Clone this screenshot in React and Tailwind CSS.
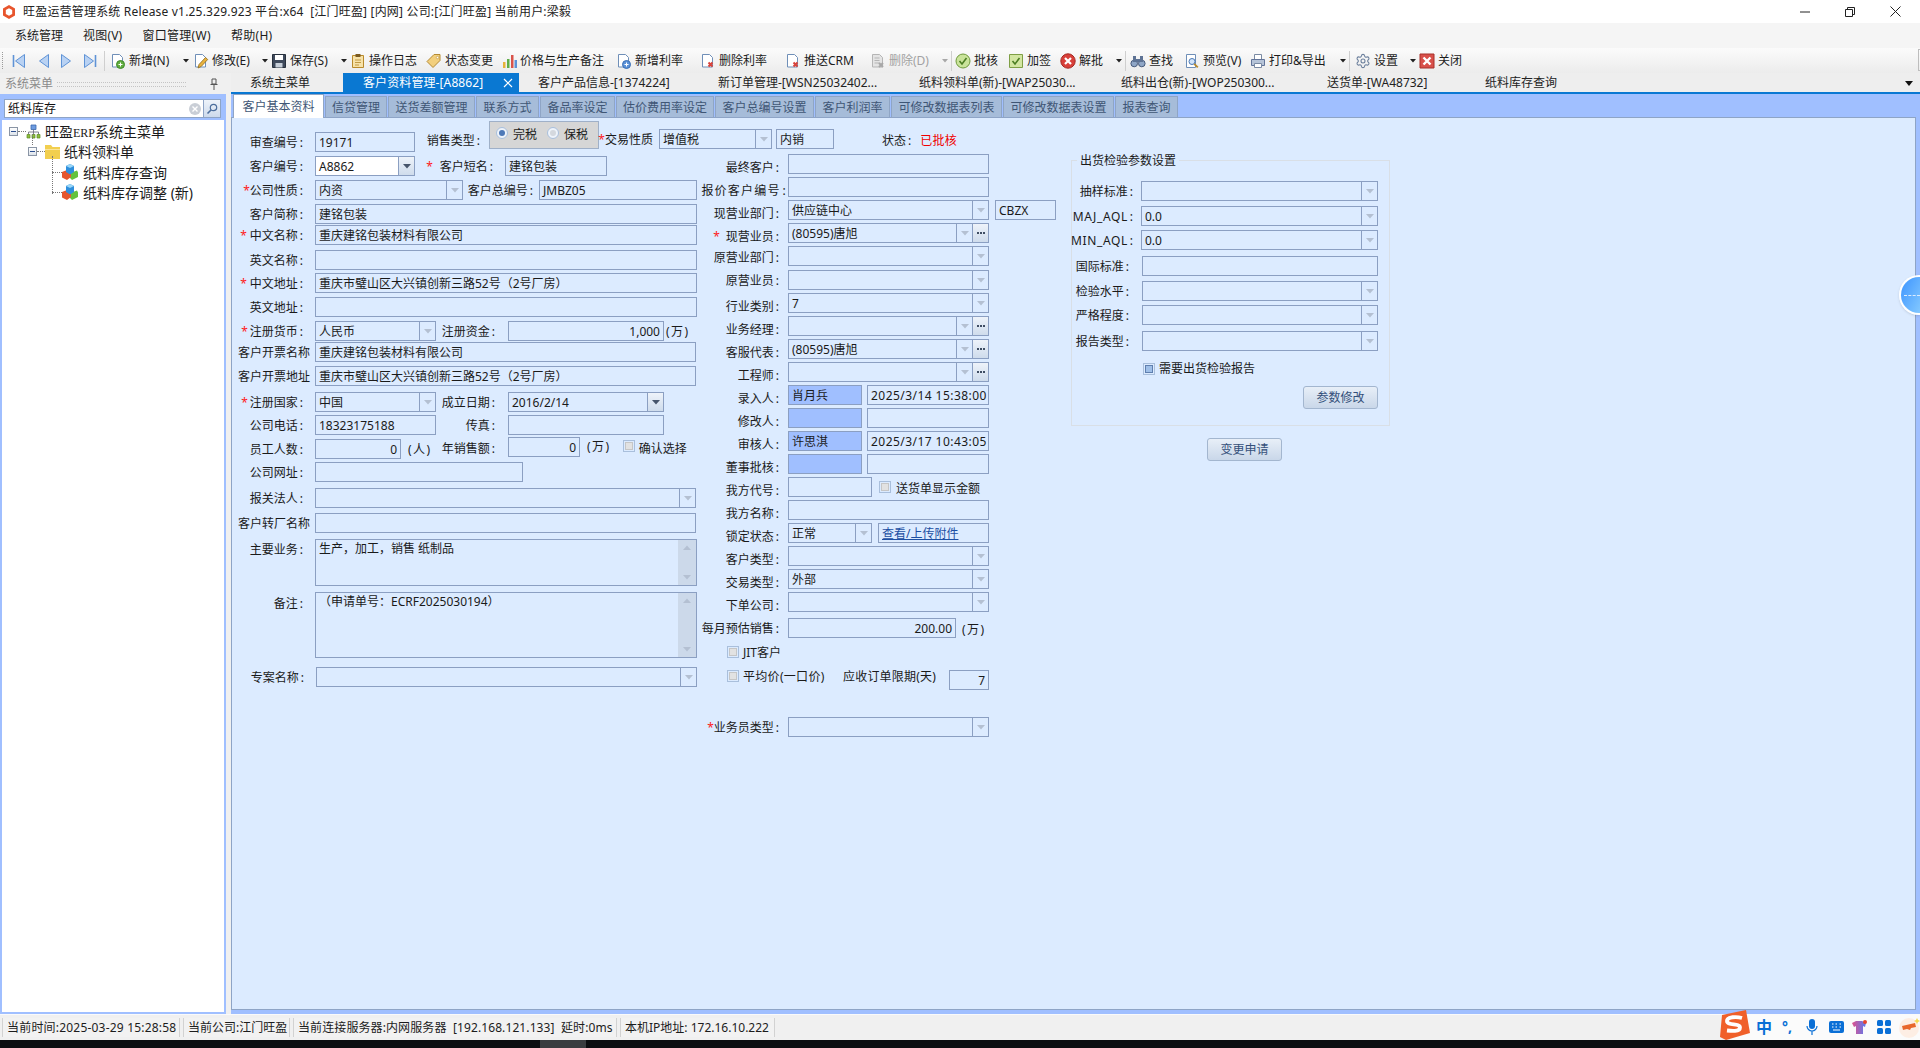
import { Children } from "react"
import { Settings } from "lucide-react"

const Tri = ({ dark }) => (
  <svg viewBox="0 0 8 5" className="w-2 h-[5px]">
    <path d="M0 0h8L4 4.5z" fill={dark ? "#47556b" : "#b4c0d2"} />
  </svg>
)

const Nav = ({ flip, bar }) => (
  <svg viewBox="0 0 14 16" className={flip ? "w-[14px] h-4 -scale-x-100" : "w-[14px] h-4"}>
    <path d="M12.5 1.5v13L3.5 8z" fill="#b9d2f3" stroke="#5f93d6" />
    {bar && <path d="M1.5 2v12" stroke="#5f93d6" strokeWidth="1.6" />}
  </svg>
)

const Doc = ({ badge, gray }) => {
  const line = gray ? "#b5b5b5" : "#6f8fb8"
  return (
    <svg viewBox="0 0 16 16" className="w-4 h-4">
      <path d="M2.5 1.5h7l3 3v9.5h-10z" fill={gray ? "#e4e4e4" : "#fff"} stroke={line} />
      {gray && <path d="M4.5 5h5M4.5 7.5h5M4.5 10h5" stroke="#b5b5b5" />}
      {badge === "green" && <g><circle cx="10.5" cy="11.5" r="4" fill="#62ad3f" stroke="#3f8a2a" /><path d="M10.5 9.5v4M8.5 11.5h4" stroke="#fff" /></g>}
      {badge === "blue" && <g><circle cx="10.5" cy="11.5" r="4" fill="#5c92d8" stroke="#3b6fb5" /><path d="M10.5 9.5v4M8.5 11.5h4" stroke="#fff" /></g>}
      {badge === "red" && <path d="M8.5 9.5l4 4m0-4l-4 4" stroke="#d9443c" strokeWidth="2" />}
      {badge === "grayx" && <path d="M9 10l4 4m0-4l-4 4" stroke="#a8a8a8" strokeWidth="2" />}
    </svg>
  )
}

const Pencil = () => (
  <svg viewBox="0 0 16 16" className="w-4 h-4">
    <path d="M2.5 1.5h7l3 3v9.5h-10z" fill="#fff" stroke="#6f8fb8" />
    <path d="M5 15l1-3.5 6.5-7 2.2 2-6.5 7z" fill="#e9b23c" stroke="#8c6a1e" strokeWidth=".8" />
  </svg>
)

const Floppy = () => (
  <svg viewBox="0 0 16 16" className="w-4 h-4">
    <path d="M1.5 1.5h13v13h-13z" fill="#3f4a5c" stroke="#27303d" />
    <path d="M4 2h8v5H4z" fill="#fff" />
    <path d="M4.5 10h7v4.5h-7z" fill="#c8d0da" />
  </svg>
)

const Clip = () => (
  <svg viewBox="0 0 16 16" className="w-4 h-4">
    <path d="M2.5 2.5h11v12h-11z" fill="#f7e2a8" stroke="#b98a2b" />
    <path d="M5.5 1h5v3h-5z" fill="#7a5a20" />
    <path d="M5 7h6M5 9.5h6M5 12h4" stroke="#c19a45" />
  </svg>
)

const TagIcon = () => (
  <svg viewBox="0 0 16 16" className="w-4 h-4">
    <path d="M8 1.5h6v6l-7 7-6-6z" fill="#f2cf7d" stroke="#b58a33" />
    <circle cx="11.5" cy="4.5" r="1.2" fill="#fff" stroke="#b58a33" strokeWidth=".6" />
  </svg>
)

const Bars = () => (
  <svg viewBox="0 0 16 16" className="w-4 h-4">
    <path d="M2 9h2.5v6H2z" fill="#e6b33a" />
    <path d="M6 6h2.5v9H6z" fill="#5fae48" />
    <path d="M10 2h2.5v13H10z" fill="#d9534a" />
    <path d="M13.5 7H16v8h-2.5z" fill="#5c92d8" />
  </svg>
)

const CheckRound = () => (
  <svg viewBox="0 0 16 16" className="w-4 h-4">
    <circle cx="8" cy="8" r="7" fill="#c9e39a" stroke="#6f9a3b" />
    <path d="M4.5 8l2.5 3 4.5-6" fill="none" stroke="#4b7d22" strokeWidth="1.6" />
  </svg>
)

const CheckBoxIcon = () => (
  <svg viewBox="0 0 16 16" className="w-4 h-4">
    <path d="M1.5 1.5h13v13h-13z" fill="#d3e6a2" stroke="#7f9f45" />
    <path d="M4.5 8l2.5 3 4.5-6" fill="none" stroke="#4b7d22" strokeWidth="1.6" />
  </svg>
)

const Unapprove = () => (
  <svg viewBox="0 0 16 16" className="w-4 h-4">
    <circle cx="8" cy="8" r="7.2" fill="#d8403a" stroke="#a52822" />
    <path d="M5 5l6 6m0-6l-6 6" stroke="#fff" strokeWidth="2.2" />
  </svg>
)

const Binoculars = () => (
  <svg viewBox="0 0 16 16" className="w-4 h-4">
    <circle cx="4.2" cy="10.5" r="3.3" fill="#8fa6c6" stroke="#46597a" />
    <circle cx="11.8" cy="10.5" r="3.3" fill="#8fa6c6" stroke="#46597a" />
    <path d="M3 3h3v6H3zM10 3h3v6h-3zM6 6h4v3H6z" fill="#5d7294" />
  </svg>
)

const Preview = () => (
  <svg viewBox="0 0 16 16" className="w-4 h-4">
    <path d="M2.5 1.5h9v13h-9z" fill="#fff" stroke="#6f8fb8" />
    <circle cx="8" cy="8.5" r="3" fill="#d3e5fa" stroke="#4b79b5" />
    <path d="M10.2 10.8l3.6 3.6" stroke="#b98a2b" strokeWidth="1.8" />
  </svg>
)

const Printer = () => (
  <svg viewBox="0 0 16 16" className="w-4 h-4">
    <path d="M4.5 1.5h7v5h-7z" fill="#fff" stroke="#7a8aa3" />
    <path d="M1.5 6.5h13v6h-13z" fill="#b6c4d8" stroke="#63759a" />
    <path d="M4.5 10.5h7v4h-7z" fill="#fff" stroke="#7a8aa3" />
  </svg>
)

const CloseRed = () => (
  <svg viewBox="0 0 16 16" className="w-4 h-4">
    <path d="M1 1h14v14H1z" fill="#d8504a" stroke="#a8302b" />
    <path d="M4.5 4.5l7 7m0-7l-7 7" stroke="#fff" strokeWidth="2.4" />
  </svg>
)

const Gear = () => <Settings className="w-4 h-4 text-[#6b7f9c]" strokeWidth={1.6} />

const Tool = ({ w, icon, label, muted }) => (
  <div className={w + " h-full flex items-center gap-[3px] shrink-0" + (muted ? " text-[#a2a2a2]" : "")}>
    {icon}
    {label && <span className="whitespace-nowrap">{label}</span>}
  </div>
)

const Drop = ({ w, muted }) => (
  <div className={w + " h-full flex items-center shrink-0"}>
    <svg viewBox="0 0 6 4" className="w-[6px] h-1">
      <path d="M0 0h6L3 3.5z" fill={muted ? "#a8a8a8" : "#222"} />
    </svg>
  </div>
)

const Sep = ({ w }) => (
  <div className={w + " h-full flex items-center shrink-0"}>
    <div className="w-px h-5 bg-[#cfcfcf]" />
  </div>
)

const Toolbar = () => (
  <div className="h-[25px] flex pl-[12px] text-[12px] text-[#1c1c1c] bg-gradient-to-b from-[#fbfbfb] to-[#ececec] relative">
    <div className="absolute left-[2px] top-[4px] h-[17px] border-l border-dotted border-[#9a9a9a]" />
    <Tool w="w-[24px]" icon={<Nav bar />} />
    <Tool w="w-[24px]" icon={<Nav />} />
    <Tool w="w-[23px]" icon={<Nav flip />} />
    <Tool w="w-[21px]" icon={<Nav flip bar />} />
    <Sep w="w-[6px]" />
    <Tool w="w-[73px]" icon={<Doc badge="green" />} label="新增(N)" />
    <Drop w="w-[10px]" />
    <Tool w="w-[69px]" icon={<Pencil />} label="修改(E)" />
    <Drop w="w-[9px]" />
    <Tool w="w-[70px]" icon={<Floppy />} label="保存(S)" />
    <Drop w="w-[9px]" />
    <Tool w="w-[76px]" icon={<Clip />} label="操作日志" />
    <Tool w="w-[75px]" icon={<TagIcon />} label="状态变更" />
    <Tool w="w-[115px]" icon={<Bars />} label="价格与生产备注" />
    <Tool w="w-[84px]" icon={<Doc badge="blue" />} label="新增利率" />
    <Tool w="w-[85px]" icon={<Doc badge="red" />} label="删除利率" />
    <Tool w="w-[85px]" icon={<Doc badge="red" />} label="推送CRM" />
    <Tool w="w-[72px]" icon={<Doc gray badge="grayx" />} label="删除(D)" muted />
    <Drop w="w-[9px]" muted />
    <Sep w="w-[4px]" />
    <Tool w="w-[53px]" icon={<CheckRound />} label="批核" />
    <Tool w="w-[52px]" icon={<CheckBoxIcon />} label="加签" />
    <Tool w="w-[56px]" icon={<Unapprove />} label="解批" />
    <Drop w="w-[9px]" />
    <Sep w="w-[5px]" />
    <Tool w="w-[54px]" icon={<Binoculars />} label="查找" />
    <Tool w="w-[66px]" icon={<Preview />} label="预览(V)" />
    <Tool w="w-[90px]" icon={<Printer />} label="打印&导出" />
    <Drop w="w-[9px]" />
    <Sep w="w-[6px]" />
    <Tool w="w-[55px]" icon={<Gear />} label="设置" />
    <Drop w="w-[9px]" />
    <Tool w="w-[60px]" icon={<CloseRed />} label="关闭" />
    <div className="absolute right-0 top-[1px] w-[2px] h-[22px] border border-r-0 border-[#bdbdbd]" />
  </div>
)

const WinTab = ({ w, children }) => (
  <div className={w + " pl-[19px] h-full flex items-center whitespace-nowrap shrink-0"}>{children}</div>
)

const DocTabs = () => (
  <div className="h-[19px] flex text-[12px] text-[#222] bg-[#eeeeee] relative">
    <WinTab w="w-[112px]">系统主菜单</WinTab>
    <div className="w-[176px] pl-[20px] pr-[6px] h-full flex items-center justify-between bg-[#0a78d2] text-white shrink-0">
      <span className="tracking-[0.1px]">客户资料管理-[A8862]</span>
      <svg viewBox="0 0 10 10" className="w-[10px] h-[10px]"><path d="M1 1l8 8m0-8L1 9" stroke="#fff" strokeWidth="1.2" /></svg>
    </div>
    <WinTab w="w-[180px]">客户产品信息-[1374224]</WinTab>
    <WinTab w="w-[201px]">新订单管理-[WSN25032402...</WinTab>
    <WinTab w="w-[202px]">纸料领料单(新)-[WAP25030...</WinTab>
    <WinTab w="w-[206px]">纸料出仓(新)-[WOP250300...</WinTab>
    <WinTab w="w-[158px]">送货单-[WA48732]</WinTab>
    <WinTab w="w-[120px]">纸料库存查询</WinTab>
    <svg viewBox="0 0 8 5" className="absolute right-[7px] top-[8px] w-2 h-[5px]"><path d="M0 0h8L4 5z" fill="#111" /></svg>
  </div>
)

const PageTab = ({ w, children }) => (
  <div className={w + " h-[21px] mr-px pt-px flex items-center justify-center bg-[#a6bcd9] border border-b-0 border-[#8fa5c5] text-[#3f5675] shrink-0"}>{children}</div>
)

const PageTabs = () => (
  <div className="h-[23px] pl-[2px] flex items-end text-[12px]">
    <div className="w-[91px] h-[24px] -mb-px mr-px relative flex items-center justify-center bg-white border border-b-0 border-[#8fa5c5] text-[#3f5675] shrink-0">客户基本资料</div>
    <PageTab w="w-[62px]">信贷管理</PageTab>
    <PageTab w="w-[87px]">送货差额管理</PageTab>
    <PageTab w="w-[63px]">联系方式</PageTab>
    <PageTab w="w-[75px]">备品率设定</PageTab>
    <PageTab w="w-[98px]">估价费用率设定</PageTab>
    <PageTab w="w-[99px]">客户总编号设置</PageTab>
    <PageTab w="w-[75px]">客户利润率</PageTab>
    <PageTab w="w-[111px]">可修改数据表列表</PageTab>
    <PageTab w="w-[111px]">可修改数据表设置</PageTab>
    <PageTab w="w-[63px]">报表查询</PageTab>
  </div>
)

const Star = ({ gap }) => <span className={"text-[#ff2020] " + (gap || "")}>*</span>

// labels in the reference leave a small gap before the colon
const withColon = (c) =>
  typeof c === "string" && c.endsWith(":") ? (
    <>
      {c.slice(0, -1)}
      <span className="ml-[2px]">:</span>
    </>
  ) : (
    c
  )

const L = ({ className, children }) => (
  <div className={"h-5 pt-[2px] flex items-center justify-end whitespace-nowrap shrink-0 text-[#1a1a1a] " + className}>
    {Children.map(children, withColon)}
  </div>
)

const Box = ({ w, children, right, className }) => (
  <div className={w + " h-5 pt-[2px] flex items-center px-[3px] border border-[#8b9fc2] whitespace-nowrap overflow-hidden shrink-0 " + (right ? "justify-end " : "") + (className || "bg-[#dcebff]")}>{children}</div>
)

const Select = ({ w, children, active, white, dots }) => (
  <div className={w + " h-5 flex border border-[#8b9fc2] shrink-0 " + (white ? "bg-white" : "bg-[#dcebff]")}>
    <div className="flex-1 min-w-0 pt-[2px] flex items-center px-[3px] whitespace-nowrap overflow-hidden">{children}</div>
    <div className={"w-4 flex items-center justify-center border-l border-[#8b9fc2] shrink-0 " + (active ? "bg-gradient-to-b from-[#eef3fa] to-[#cfdcec]" : "")}>
      <Tri dark={active} />
    </div>
    {dots && (
      <div className="w-4 flex items-center justify-center gap-px border-l border-[#8b9fc2] bg-gradient-to-b from-[#eef3fa] to-[#cfdcec] shrink-0">
        <i className="w-[2px] h-[2px] bg-[#3f4d63]" />
        <i className="w-[2px] h-[2px] bg-[#3f4d63]" />
        <i className="w-[2px] h-[2px] bg-[#3f4d63]" />
      </div>
    )}
  </div>
)

const Memo = ({ h, children }) => (
  <div className={h + " w-[382px] flex border border-[#8b9fc2] bg-[#dcebff] shrink-0"}>
    <div className="flex-1 px-[3px] leading-[18px]">{children}</div>
    <div className="w-[18px] flex flex-col items-center justify-between py-[5px] bg-[#ccd9ea]">
      <span className="rotate-180 flex"><Tri /></span>
      <Tri />
    </div>
  </div>
)

const Check = ({ on }) => (
  <span className="w-3 h-3 flex items-center justify-center border border-[#a9bfdc] bg-[#dcebff] shrink-0">
    <i className={"block w-2 h-2 border " + (on ? "bg-[#9fbfe8] border-[#5f7fae]" : "bg-[#e2e2e2] border-[#c6c6c6]")} />
  </span>
)

const Radio = ({ on, className }) => (
  <span className={"w-3 h-3 rounded-full flex items-center justify-center border border-[#a9bfdc] bg-[#eef3fa] shrink-0 " + (className || "")}>
    <i className={"block w-[6px] h-[6px] rounded-full " + (on ? "bg-[#4e79b8]" : "bg-[#d4d8de]")} />
  </span>
)

const Btn = ({ className, children }) => (
  <div className={"w-[75px] h-[23px] flex items-center justify-center rounded-[3px] border border-[#a3b6cf] bg-gradient-to-b from-[#e8eff8] to-[#c9d7e9] text-[#34507a] shrink-0 " + className}>{children}</div>
)

const Row = ({ className, children }) => <div className={"flex items-start " + (className || "")}>{children}</div>

const TopRow = () => (
  <div className="h-[31px] flex items-start">
    <L className="w-[74px] pr-[7px] mt-[11px]">审查编号:</L>
    <div className="ml-[5px] mt-[11px]"><Box w="w-[100px]">19171</Box></div>
    <L className="w-[74px] pr-[9px] mt-[9px]">销售类型:</L>
    <div className="w-[110px] h-[28px] flex pt-[5px] pl-[6px] bg-[#d6d6d6] border border-[#9fb0c8] shrink-0">
      <Radio on />
      <span className="ml-[5px] mt-[2px] leading-3">完税</span>
      <Radio className="ml-[10px]" />
      <span className="ml-[5px] mt-[2px] leading-3">保税</span>
    </div>
    <L className="w-[60px] pr-[6px] mt-[8px]"><Star />交易性质</L>
    <div className="mt-[8px]"><Select w="w-[113px]">增值税</Select></div>
    <div className="ml-[4px] mt-[8px]"><Box w="w-[58px]">内销</Box></div>
    <L className="ml-[48px] mt-[9px]">状态:</L>
    <L className="ml-[9px] mt-[9px] !text-[#f00000] tracking-[0.3px]">已批核</L>
  </div>
)

const ColOne = () => (
  <div className="w-[461px] pt-[4px] shrink-0">
    <Row>
      <L className="w-[74px] pr-[7px]">客户编号:</L>
      <div className="ml-[5px]"><Select w="w-[100px]" white active>A8862</Select></div>
      <L className="w-[90px] pr-[12px]"><Star gap="mr-[7px]" />客户短名:</L>
      <Box w="w-[102px]">建铭包装</Box>
    </Row>
    <Row className="mt-[4px]">
      <L className="w-[74px] pr-[7px]"><Star />公司性质:</L>
      <div className="ml-[5px]"><Select w="w-[148px]">内资</Select></div>
      <L className="w-[76px] pr-[6px]">客户总编号:</L>
      <Box w="w-[158px]">JMBZ05</Box>
    </Row>
    <Row className="mt-[4px]">
      <L className="w-[74px] pr-[7px]">客户简称:</L>
      <div className="ml-[5px]"><Box w="w-[382px]">建铭包装</Box></div>
    </Row>
    <Row className="mt-px">
      <L className="w-[74px] pr-[7px]"><Star gap="mr-[3px]" />中文名称:</L>
      <div className="ml-[5px]"><Box w="w-[382px]">重庆建铭包装材料有限公司</Box></div>
    </Row>
    <Row className="mt-[5px]">
      <L className="w-[74px] pr-[7px]">英文名称:</L>
      <div className="ml-[5px]"><Box w="w-[382px]" /></div>
    </Row>
    <Row className="mt-[3px]">
      <L className="w-[74px] pr-[7px]"><Star gap="mr-[3px]" />中文地址:</L>
      <div className="ml-[5px]"><Box w="w-[382px]">重庆市璧山区大兴镇创新三路52号（2号厂房）</Box></div>
    </Row>
    <Row className="mt-[4px]">
      <L className="w-[74px] pr-[7px]">英文地址:</L>
      <div className="ml-[5px]"><Box w="w-[382px]" /></div>
    </Row>
    <Row className="mt-[4px]">
      <L className="w-[74px] pr-[7px]"><Star gap="mr-[2px]" />注册货币:</L>
      <div className="ml-[5px]"><Select w="w-[121px]">人民币</Select></div>
      <L className="w-[72px] pr-[13px]">注册资金:</L>
      <Box w="w-[156px]" right>1,000</Box>
      <L className="ml-[2px] tracking-[1.5px]">(万)</L>
    </Row>
    <Row className="mt-px">
      <L className="w-[74px]">客户开票名称</L>
      <div className="ml-[5px]"><Box w="w-[381px]">重庆建铭包装材料有限公司</Box></div>
    </Row>
    <Row className="mt-[4px]">
      <L className="w-[74px]">客户开票地址</L>
      <div className="ml-[5px]"><Box w="w-[381px]">重庆市璧山区大兴镇创新三路52号（2号厂房）</Box></div>
    </Row>
    <Row className="mt-[6px]">
      <L className="w-[74px] pr-[7px]"><Star gap="mr-[2px]" />注册国家:</L>
      <div className="ml-[5px]"><Select w="w-[121px]">中国</Select></div>
      <L className="w-[72px] pr-[13px]">成立日期:</L>
      <Select w="w-[156px]" active>2016/2/14</Select>
    </Row>
    <Row className="mt-[3px]">
      <L className="w-[74px] pr-[7px]">公司电话:</L>
      <div className="ml-[5px]"><Box w="w-[121px]">18323175188</Box></div>
      <L className="w-[72px] pr-[13px]">传真:</L>
      <Box w="w-[156px]" />
    </Row>
    <Row className="mt-[2px]">
      <L className="w-[74px] pr-[7px] mt-[2px]">员工人数:</L>
      <div className="ml-[5px] mt-[2px]"><Box w="w-[86px]" right>0</Box></div>
      <L className="w-[35px] !justify-start pl-[7px] mt-[2px] tracking-[1.5px]">(人)</L>
      <L className="w-[72px] pr-[13px] mt-[1px]">年销售额:</L>
      <Box w="w-[72px]" right>0</Box>
      <L className="ml-[7px] -mt-[1px] tracking-[1.5px]">(万)</L>
      <div className="ml-[12px] mt-[3px]"><Check /></div>
      <L className="ml-[4px] mt-[1px]">确认选择</L>
    </Row>
    <Row className="mt-[3px]">
      <L className="w-[74px] pr-[7px]">公司网址:</L>
      <div className="ml-[5px]"><Box w="w-[208px]" /></div>
    </Row>
    <Row className="mt-[6px]">
      <L className="w-[74px] pr-[7px]">报关法人:</L>
      <div className="ml-[5px]"><Select w="w-[381px]" /></div>
    </Row>
    <Row className="mt-[5px]">
      <L className="w-[74px]">客户转厂名称</L>
      <div className="ml-[5px]"><Box w="w-[381px]" /></div>
    </Row>
    <Row className="mt-[6px]">
      <L className="w-[74px] pr-[7px]">主要业务:</L>
      <div className="ml-[5px]"><Memo h="h-[47px]">生产，加工，销售 纸制品</Memo></div>
    </Row>
    <Row className="mt-[6px]">
      <L className="w-[74px] pr-[7px] mt-px">备注:</L>
      <div className="ml-[5px]"><Memo h="h-[66px]">（申请单号：ECRF2025030194）</Memo></div>
    </Row>
    <Row className="mt-[9px]">
      <L className="w-[75px] pr-[7px]">专案名称:</L>
      <div className="ml-[5px]"><Select w="w-[381px]" /></div>
    </Row>
  </div>
)

// labels of the middle column sit a few pixels below their boxes
const M = ({ className, label, star, drop, children }) => (
  <Row className={"h-5 " + (className || "mt-[3px]")}>
    <L className={"w-[91px] pr-[9px] " + (drop || "mt-[3px]")}>{star}{label}</L>
    {children}
  </Row>
)

const ColTwo = () => (
  <div className="w-[359px] mt-[2px] shrink-0">
    <M className="mt-0" label="最终客户:"><Box w="w-[201px]" /></M>
    <Row className="mt-[3px] h-5">
      <L className="w-[91px] pr-px mt-[3px] tracking-[1.2px]">报价客户编号:</L>
      <Box w="w-[201px]" />
    </Row>
    <M label="现营业部门:">
      <Select w="w-[201px]">供应链中心</Select>
      <div className="ml-[6px]"><Box w="w-[61px]">CBZX</Box></div>
    </M>
    <M star={<Star gap="mr-[6px]" />} label="现营业员:"><Select w="w-[201px]" dots>(80595)唐旭</Select></M>
    <M drop="mt-[1px]" label="原营业部门:"><Select w="w-[201px]" /></M>
    <M className="mt-[4px]" drop="mt-0" label="原营业员:"><Select w="w-[201px]" /></M>
    <M label="行业类别:"><Select w="w-[201px]">7</Select></M>
    <M label="业务经理:"><Select w="w-[201px]" dots /></M>
    <M label="客服代表:"><Select w="w-[201px]" dots>(80595)唐旭</Select></M>
    <M label="工程师:"><Select w="w-[201px]" dots /></M>
    <M label="录入人:">
      <Box w="w-[74px]" className="bg-[#a0bfff]">肖月兵</Box>
      <div className="ml-[5px]"><Box w="w-[122px]" className="bg-[#dcebff] tracking-[0.45px]">2025/3/14 15:38:00</Box></div>
    </M>
    <M label="修改人:">
      <Box w="w-[74px]" className="bg-[#a0bfff]" />
      <div className="ml-[5px]"><Box w="w-[122px]" /></div>
    </M>
    <M label="审核人:">
      <Box w="w-[74px]" className="bg-[#a0bfff]">许思淇</Box>
      <div className="ml-[5px]"><Box w="w-[122px]" className="bg-[#dcebff] tracking-[0.45px]">2025/3/17 10:43:05</Box></div>
    </M>
    <M label="董事批核:">
      <Box w="w-[74px]" className="bg-[#a0bfff]" />
      <div className="ml-[5px]"><Box w="w-[122px]" /></div>
    </M>
    <M label="我方代号:">
      <Box w="w-[84px]" />
      <div className="ml-[7px] mt-[4px]"><Check /></div>
      <L className="ml-[5px] mt-px">送货单显示金额</L>
    </M>
    <M label="我方名称:"><Box w="w-[201px]" /></M>
    <M label="锁定状态:">
      <Select w="w-[84px]">正常</Select>
      <div className="ml-[6px]"><Box w="w-[111px]"><span className="text-[#1d4fa3] underline">查看/上传附件</span></Box></div>
    </M>
    <M label="客户类型:"><Select w="w-[201px]" /></M>
    <M label="交易类型:"><Select w="w-[201px]">外部</Select></M>
    <M label="下单公司:"><Select w="w-[201px]" /></M>
    <M className="mt-[6px]" drop="mt-0" label="每月预估销售:">
      <Box w="w-[168px]" right>200.00</Box>
      <L className="ml-[6px] mt-[1px] tracking-[1.5px]">(万)</L>
    </M>
    <Row className="mt-[4px] pl-[30px]">
      <div className="mt-[4px]"><Check /></div>
      <L className="ml-[4px]">JIT客户</L>
    </Row>
    <Row className="mt-[8px] pl-[30px]">
      <Check />
      <span className="ml-[4px] leading-[14px] whitespace-nowrap w-[100px] tracking-[0.3px]">平均价(一口价)</span>
      <span className="leading-[14px] whitespace-nowrap w-[106px] tracking-[0.2px]">应收订单限期(天)</span>
      <Box w="w-[40px]" right>7</Box>
    </Row>
    <M className="mt-[27px]" drop="mt-0" star={<Star />} label="业务员类型:"><Select w="w-[201px]" /></M>
  </div>
)

const Q = ({ className, label, narrow, children }) => (
  <Row className={className}>
    <L className={narrow ? "w-[70px] pr-[13px]" : "w-[69px] pr-[8px]"}>{label}</L>
    {children}
  </Row>
)

const ColThree = () => (
  <div className="ml-[15px] mt-[8px] w-[319px] shrink-0">
    <div className="relative h-[266px] flex flex-col border border-[#d9dfe6] pt-[20px]">
      <span className="absolute left-[5px] -top-[7px] px-[3px] bg-[#dcebff] leading-[14px]">出货检验参数设置</span>
      <Q label="抽样标准:"><Select w="w-[237px]" /></Q>
      <Q className="mt-[5px]" label={[<span key="t" className="tracking-[0.6px]">MAJ_AQL</span>, ":"]}><Select w="w-[237px]">0.0</Select></Q>
      <Q className="mt-[4px]" label={[<span key="t" className="tracking-[0.6px]">MIN_AQL</span>, ":"]}><Select w="w-[237px]">0.0</Select></Q>
      <Q narrow className="mt-[6px]" label="国际标准:"><Box w="w-[236px]" /></Q>
      <Q narrow className="mt-[5px]" label="检验水平:"><Select w="w-[236px]" /></Q>
      <Q narrow className="mt-[4px]" label="严格程度:"><Select w="w-[236px]" /></Q>
      <Q narrow className="mt-[6px]" label="报告类型:"><Select w="w-[236px]" /></Q>
      <div className="mt-[10px] pl-[71px] flex items-center leading-[14px]">
        <Check on />
        <span className="ml-[4px] pt-px">需要出货检验报告</span>
      </div>
      <Btn className="self-end mr-[11px] mt-[10px]">参数修改</Btn>
    </div>
    <Btn className="ml-[136px] mt-[12px]">变更申请</Btn>
  </div>
)

const MainPanel = () => (
  <div className="flex-1 flex flex-col bg-[#a0bfff] min-h-0">
    <PageTabs />
    <div className="flex-1 mr-[4px] mb-[4px] pl-[4px] pt-[3px] bg-[#dcebff] border border-[#8ea4c6] text-[12px] text-[#1a1a1a] min-h-0">
      <TopRow />
      <div className="flex items-start">
        <ColOne />
        <ColTwo />
        <ColThree />
      </div>
    </div>
  </div>
)

const Minus = () => (
  <span className="w-[9px] h-[9px] flex items-center justify-center border border-[#8a95a5] bg-gradient-to-b from-white to-[#dde3ea] shrink-0">
    <i className="block w-[5px] h-px bg-[#2c4f8f]" />
  </span>
)

const Network = () => (
  <svg viewBox="0 0 15 15" className="w-[15px] h-[15px] shrink-0">
    <path d="M5 1h5v4.5H5z" fill="#6d9be0" stroke="#3b68ad" strokeWidth=".8" />
    <path d="M7.5 5.5V8M2.5 10.5V8h10v2.5M7.5 8v2.5" fill="none" stroke="#667" strokeWidth=".8" />
    <path d="M1 10.5h3v3.5H1zM6 10.5h3v3.5H6zM11 10.5h3v3.5h-3z" fill="#8fbf3e" stroke="#5d8a22" strokeWidth=".7" />
  </svg>
)

const Folder = () => (
  <svg viewBox="0 0 15 15" className="w-[15px] h-[15px] shrink-0">
    <path d="M0 1h6l1.5 2H15v12H0z" fill="#f2cf4f" />
    <path d="M0 5h15v1H0z" fill="#fae49a" />
  </svg>
)

const Cube = () => (
  <svg viewBox="0 0 16 16" className="w-4 h-4 shrink-0">
    <path d="M8 9l7-2.5 1 2V13l-6 3-2-2z" fill="#63c23c" />
    <path d="M0 8l5-2 4 2v5l-4 3-5-2.5z" fill="#e5552e" />
    <path d="M4 2l4-2 4 2v6l-4 2.5L4 8z" fill="#2f8fdc" />
    <path d="M4 2l4 2 4-2-4-2z" fill="#9ad6f7" />
  </svg>
)

const Sidebar = () => (
  <div className="w-[226px] flex flex-col shrink-0">
    <div className="h-[21px] flex items-center pl-[5px] pt-[1px] bg-[#f0f0f0] text-[12px] text-[#8a8a8a]">
      <span>系统菜单</span>
      <div className="ml-[4px] w-[129px] h-[5px] border-y border-dotted border-[#c4c4c4]" />
      <svg viewBox="0 0 8 12" className="ml-[24px] w-2 h-3">
        <path d="M2 1h4v5H2zM0.5 6.5h7M4 7v5" fill="none" stroke="#555" />
      </svg>
    </div>
    <div className="flex-1 flex flex-col bg-[#a0bfff] px-[2px] pb-[2px] min-h-0">
      <div className="h-[26px] shrink-0 pt-[5px] pl-[2px] flex items-start">
        <div className="w-[200px] h-[19px] flex items-center justify-between pl-[3px] pr-[2px] bg-white border border-[#8ea4c6] text-[12px] text-[#111]">
          <span>纸料库存</span>
          <span className="w-3 h-3 rounded-full bg-[#c9ced6] flex items-center justify-center">
            <svg viewBox="0 0 8 8" className="w-2 h-2"><path d="M1.5 1.5l5 5m0-5l-5 5" stroke="#fff" strokeWidth="1.4" /></svg>
          </span>
        </div>
        <div className="w-[17px] h-[19px] flex items-center justify-center bg-gradient-to-b from-[#eef3fa] to-[#cddaec] border border-l-0 border-[#8ea4c6]">
          <svg viewBox="0 0 12 12" className="w-3 h-3">
            <circle cx="7.5" cy="4.5" r="3.2" fill="none" stroke="#4b6d9c" strokeWidth="1.2" />
            <path d="M5 7l-3.5 3.5" stroke="#4b6d9c" strokeWidth="1.6" />
          </svg>
        </div>
      </div>
      <div className="relative flex-1 bg-white text-[14px] text-[#1a1a1a] pt-[1px] min-h-0">
        <div className="absolute left-[30px] top-[14px] h-[11px] border-l border-dotted border-[#777]" />
        <div className="absolute left-[50px] top-[36px] h-[38px] border-l border-dotted border-[#777]" />
        <div className="h-5 flex items-center pl-[7px]">
          <Minus />
          <i className="w-2 border-t border-dotted border-[#777]" />
          <Network />
          <span className="ml-[4px] whitespace-nowrap">旺盈<span className="font-['Liberation_Serif',serif] text-[12px]">ERP</span>系统主菜单</span>
        </div>
        <div className="h-[21px] flex items-center pl-[26px]">
          <Minus />
          <i className="w-2 border-t border-dotted border-[#777]" />
          <Folder />
          <span className="ml-[4px]">纸料领料单</span>
        </div>
        <div className="h-5 flex items-center pl-[50px]">
          <i className="w-[10px] border-t border-dotted border-[#777]" />
          <Cube />
          <span className="ml-[5px]">纸料库存查询</span>
        </div>
        <div className="h-5 flex items-center pl-[50px]">
          <i className="w-[10px] border-t border-dotted border-[#777]" />
          <Cube />
          <span className="ml-[5px]">纸料库存调整 (新)</span>
        </div>
      </div>
    </div>
  </div>
)

const Cell = ({ w, children }) => (
  <div className={w + " h-[19px] mr-[3px] flex items-center pl-[4px] border-x border-[#d2d2d2] bg-[#f2f2f2] whitespace-nowrap shrink-0"}>{children}</div>
)

const StatusBar = () => (
  <div className="relative h-[26px] flex items-start pt-[3px] pl-[2px] bg-[#f0f0f0] border-t border-[#fafafa] text-[12px] text-[#1c1c1c] shrink-0">
    <Cell w="w-[178px]"><span className="tracking-[0.2px]">当前时间:2025-03-29 15:28:58</span></Cell>
    <Cell w="w-[107px]">当前公司:江门旺盈</Cell>
    <Cell w="w-[324px]"><span className="tracking-[0.1px]">当前连接服务器:内网服务器&nbsp;&nbsp;[192.168.121.133]&nbsp;&nbsp;延时:0ms</span></Cell>
    <Cell w="w-[155px]">本机IP地址: 172.16.10.222</Cell>
    <div className="absolute right-0 -top-px h-[26px] w-[190px] bg-[#fbfbfb] flex items-center pl-[26px]">
      <span className="w-4 font-bold text-[16px] text-[#0a6fd6] leading-none shrink-0">中</span>
      <span className="ml-[10px] w-[14px] text-[14px] font-bold text-[#0a6fd6] leading-none shrink-0">°,</span>
      <svg viewBox="0 0 12 16" className="ml-[10px] w-3 h-4 shrink-0">
        <rect x="3" y="0" width="6" height="10" rx="3" fill="#0a6fd6" />
        <path d="M1 7a5 5 0 0 0 10 0M6 12v4" fill="none" stroke="#0a6fd6" strokeWidth="1.2" />
      </svg>
      <svg viewBox="0 0 15 12" className="ml-[11px] w-[15px] h-3 shrink-0">
        <rect width="15" height="12" rx="2" fill="#0a6fd6" />
        <path d="M3 3h1.5M6.5 3H8M10.5 3H12M3 6h1.5M6.5 6H8M10.5 6H12M4 9h7" stroke="#fff" />
      </svg>
      <svg viewBox="0 0 15 15" className="ml-[8px] w-[15px] h-[15px] shrink-0">
        <defs>
          <linearGradient id="shirt" x1="0" x2="1">
            <stop offset="0" stopColor="#e0508c" />
            <stop offset="1" stopColor="#5a7cf0" />
          </linearGradient>
        </defs>
        <path d="M0 3l4-2h6l4 2-1 4-2-1v8H4V6L2 7z" fill="url(#shirt)" />
        <circle cx="13" cy="2" r="2" fill="#e8452c" />
      </svg>
      <svg viewBox="0 0 14 14" className="ml-[10px] w-[14px] h-[14px] shrink-0">
        <rect width="6" height="6" rx="1.5" fill="#0a6fd6" />
        <rect x="8" width="6" height="6" rx="1.5" fill="#0a6fd6" />
        <rect y="8" width="6" height="6" rx="1.5" fill="#0a6fd6" />
        <rect x="8" y="8" width="6" height="6" rx="1.5" fill="#0a6fd6" />
      </svg>
      <svg viewBox="0 0 22 22" className="ml-[7px] w-[22px] h-[22px] shrink-0">
        <circle cx="11" cy="12" r="10" fill="#fdeee4" />
        <path d="M4 10l13-3 1 4-5 1-1 2-3-1-4 1z" fill="#e8672c" />
        <path d="M19 2l1 2 2 1-2 1-1 2-1-2-2-1 2-1z" fill="#f6d94a" />
      </svg>
    </div>
    <svg viewBox="0 0 32 31" className="absolute right-[170px] -top-[5px] w-8 h-[31px]">
      <path d="M4 5l24-5 4 23-24 7-6-3z" fill="#f0602a" />
      <path d="M24 8c-5-1.5-15-1.500-15 3 0 5 13 2 13 6.500s-9 3.500-13 3" fill="none" stroke="#fff" strokeWidth="3.8" />
    </svg>
  </div>
)

const App = () => (
  <div className="relative w-[1920px] h-[1048px] overflow-hidden flex flex-col bg-[#f0f0f0] font-['Noto_Sans','Noto_Sans_CJK_SC',sans-serif] text-[12px]">
    <div className="h-[23px] flex items-center bg-white shrink-0">
      <svg viewBox="0 0 14 14" className="ml-[2px] w-[14px] h-[14px]">
        <path d="M7 0l6 3.5v7L7 14l-6-3.5v-7z" fill="#e8552d" />
        <path d="M7 3.2l3.2 1.9v3.8L7 10.8 3.8 8.9V5.1z" fill="#fff" />
      </svg>
      <span className="ml-[7px] whitespace-pre text-[#222] tracking-[0.19px]">旺盈运营管理系统 Release v1.25.329.923 平台:x64  [江门旺盈] [内网] 公司:[江门旺盈] 当前用户:梁毅</span>
      <div className="ml-auto flex items-center">
        <svg viewBox="0 0 10 10" className="w-[10px] h-[10px]"><path d="M0 5h10" stroke="#222" /></svg>
        <svg viewBox="0 0 10 10" className="ml-[35px] w-[10px] h-[10px]"><path d="M.5 2.5h7v7h-7zM2.5 2.5v-2h7v7h-2" fill="none" stroke="#222" /></svg>
        <svg viewBox="0 0 11 11" className="ml-[35px] mr-[19px] w-[11px] h-[11px]"><path d="M.5.5l10 10m0-10l-10 10" stroke="#222" /></svg>
      </div>
    </div>
    <div className="h-[25px] flex items-center pl-[15px] gap-[20px] bg-[#f5f5f5] text-[#1c1c1c] shrink-0">
      <span>系统管理</span>
      <span className="tracking-[0.2px]">视图(V)</span>
      <span className="tracking-[0.3px]">窗口管理(W)</span>
      <span className="tracking-[0.3px]">帮助(H)</span>
    </div>
    <Toolbar />
    <div className="flex-1 flex min-h-0">
      <Sidebar />
      <div className="w-[5px] shrink-0" />
      <div className="flex-1 flex flex-col min-w-0">
        <DocTabs />
        <div className="h-[2px] bg-[#0a78d2] shrink-0" />
        <MainPanel />
      </div>
    </div>
    <StatusBar />
    <div className="h-2 flex overflow-hidden bg-[#0b0d10] shrink-0">
      <div className="ml-[540px] w-[46px] bg-[#3a3d40]" />
      <span className="ml-[1229px] pt-[6px] leading-[14px] text-white">15:28</span>
    </div>
    <div className="absolute right-0 top-[275px] w-[21px] h-[40px] rounded-l-full bg-gradient-to-br from-[#3a93ff] to-[#83c8ff] border-2 border-r-0 border-white shadow flex items-center justify-end">
      <i className="w-4 border-t border-dashed border-[#dcecff]" />
    </div>
  </div>
)

export default App
